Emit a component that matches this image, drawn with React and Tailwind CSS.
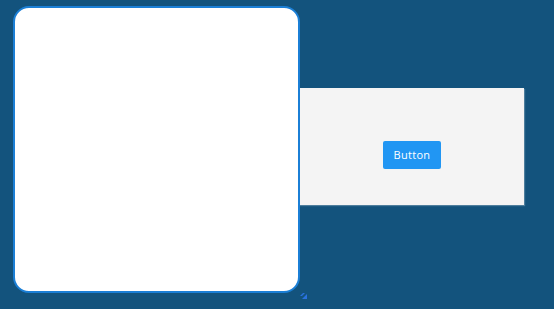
export default function App() {
  return (
    <div className="h-[309px] w-[554px] bg-[#13537d] flex items-start pl-[13px] pt-[6px] font-['Open_Sans',sans-serif]">
      <div className="relative">
        <div className="w-[287px] h-[287px] bg-white rounded-[16px] border-2 border-[#1b7fd6]" />
        <svg className="absolute left-[287px] top-[287px]" width="7" height="6" viewBox="0 0 7 6">
          <path d="M3 0 L5 0 L2 3 L0 3 Z" fill="#2a72e0" />
          <path d="M2 6 L7 1 L7 6 Z" fill="#2a72e0" />
        </svg>
      </div>
      <div className="mt-[82px] -ml-[3px] w-[227px] h-[117px] bg-[#f4f4f4] border-l border-[#8fb8da] shadow-[1px_1px_1px_rgba(255,255,255,0.25)] flex justify-center pt-[53px] pl-[2px]">
        <button className="w-[58px] h-[28px] bg-[#2196f3] rounded-[2px] text-white text-[11px] font-medium tracking-[0.3px]">
          Button
        </button>
      </div>
    </div>
  );
}
